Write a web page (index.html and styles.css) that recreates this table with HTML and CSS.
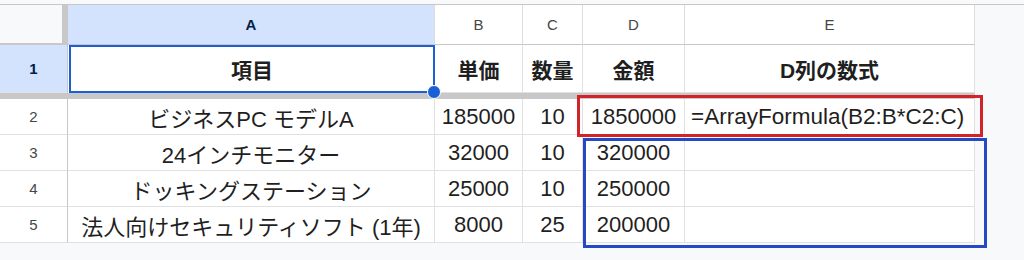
FILE: index.html
```html
<!DOCTYPE html>
<html lang="ja">
  <head>
    <meta charset="UTF-8" />
    <title>ArrayFormula</title>
    <link rel="stylesheet" href="styles.css">
  </head>
  <body>
    <div class="sheet">
      <div class="grid">
        <div class="corner"></div>
        <div class="col-head active">A</div>
        <div class="col-head">B</div>
        <div class="col-head">C</div>
        <div class="col-head">D</div>
        <div class="col-head">E</div>

        <div class="row-head active">1</div>
        <div class="cell bold selected">項目<span class="handle"></span></div>
        <div class="cell bold">単価</div>
        <div class="cell bold">数量</div>
        <div class="cell bold">金額</div>
        <div class="cell bold">D列の数式</div>

        <div class="freeze"></div>

        <div class="row-head">2</div>
        <div class="cell">ビジネスPC モデルA</div>
        <div class="cell">185000</div>
        <div class="cell">10</div>
        <div class="cell">1850000</div>
        <div class="cell left">=ArrayFormula(B2:B*C2:C)</div>

        <div class="row-head">3</div>
        <div class="cell">24インチモニター</div>
        <div class="cell">32000</div>
        <div class="cell">10</div>
        <div class="cell">320000</div>
        <div class="cell"></div>

        <div class="row-head">4</div>
        <div class="cell">ドッキングステーション</div>
        <div class="cell">25000</div>
        <div class="cell">10</div>
        <div class="cell">250000</div>
        <div class="cell"></div>

        <div class="row-head">5</div>
        <div class="cell">法人向けセキュリティソフト (1年)</div>
        <div class="cell">8000</div>
        <div class="cell">25</div>
        <div class="cell">200000</div>
        <div class="cell"></div>
      </div>

      <!-- hand-drawn boxes over the formula row and the spilled results -->
      <div class="mark mark-red"></div>
      <div class="mark mark-blue"></div>
    </div>
  </body>
</html>
```

FILE: styles.css
```css
html {
  font-family: "Liberation Sans", "Noto Sans CJK JP", sans-serif;
}
body {
  margin: 0;
  background-color: #f8f9fa;
  color: #1f1f1f;
}
.sheet {
  position: relative;
  margin-top: 4px;
  padding-bottom: 16px;
  border-top: 1px solid #c7c7c7;
}
.grid {
  display: grid;
  width: 975px;
  grid-template-columns: 68px 367px 88px 60px 102px 290px;
  grid-template-rows: 40px 48px 6px repeat(4, 36px);
  background-color: #fff;
}
.grid > div {
  box-sizing: border-box;
  display: flex;
  align-items: center;
  justify-content: center;
  white-space: nowrap;
}
.corner {
  background-color: #f8f9fa;
  border-right: 6px solid #c8c8c8;
  border-bottom: 2px solid #c8c8c8;
}
.col-head {
  font-size: 15px;
  color: #444746;
  border-right: 1px solid #dcdcdc;
  border-bottom: 1px solid #c7c7c7;
}
.row-head {
  font-size: 15px;
  color: #444746;
  border-right: 1px solid #c7c7c7;
  border-bottom: 1px solid #e1e1e1;
}
.col-head.active,
.row-head.active {
  background-color: #d3e3fd;
  color: #041e49;
  font-weight: bold;
}
.cell {
  position: relative;
  font-size: 22px;
  color: #1f1f1f;
  border-right: 1px solid #e1e1e1;
  border-bottom: 1px solid #e1e1e1;
}
.cell.bold {
  font-weight: bold;
  font-size: 21px;
}
.cell.left {
  justify-content: flex-start;
  padding-left: 6px;
  font-size: 22.5px;
}
.selected {
  border: 2px solid #1a5fd6 !important;
  margin-left: 1px;
}
.handle {
  position: absolute;
  right: -8px;
  bottom: -8px;
  width: 12px;
  height: 12px;
  border-radius: 50%;
  background-color: #1a5fd6;
  border: 1px solid #fff;
  z-index: 2;
}
.freeze {
  grid-column: 1 / -1;
  background-color: #c8c8c8;
}
.mark {
  position: absolute;
  z-index: 3;
  box-sizing: border-box;
  border: 3px solid;
}
.mark-red {
  left: 577px;
  top: 90px;
  width: 406px;
  height: 42px;
  border-color: #d2232a;
}
.mark-blue {
  left: 583px;
  top: 133px;
  width: 404px;
  height: 110px;
  border-color: #2748c4;
}
```
